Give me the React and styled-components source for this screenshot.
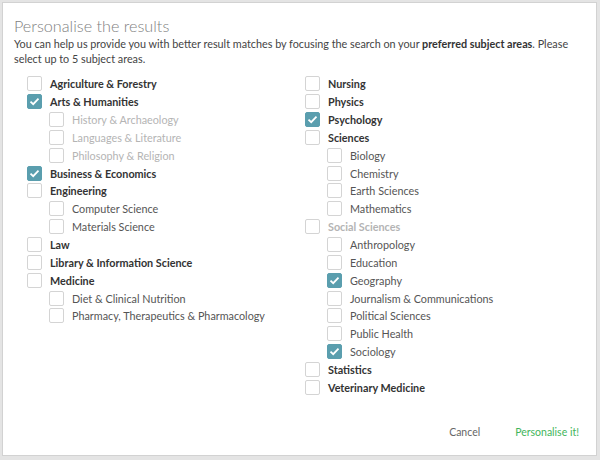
import React from "react";
import styled, { createGlobalStyle } from "styled-components";

const Global = createGlobalStyle`
  html, body {
    margin: 0;
    background: #e4e4e4;
  }
  body {
    font-family: Lato, "Open Sans", sans-serif;
  }
`;

const Frame = styled.div`
  width: 600px;
  height: 460px;
  box-sizing: border-box;
  padding: 2px 3px 4px 2px;
`;

const Modal = styled.div`
  height: 100%;
  box-sizing: border-box;
  background: #fff;
  border: 1px solid #d2d2d2;
  padding: 12px 12px 0 11px;
  display: flex;
  flex-direction: column;
`;

const Title = styled.h1`
  margin: 0;
  font-size: 16.2px;
  font-weight: 300;
  color: #7f7f7f;
  line-height: 22px;
`;

const Intro = styled.p`
  margin: 0;
  font-size: 10.8px;
  line-height: 14.5px;
  color: #444;
  strong {
    font-weight: 700;
    color: #333;
  }
`;

const Columns = styled.div`
  display: grid;
  grid-template-columns: 278px 1fr;
  margin-top: 9px;
  padding-left: 13px;
`;

const Column = styled.div`
  display: flex;
  flex-direction: column;
`;

const Row = styled.label`
  display: flex;
  align-items: center;
  height: 17.85px;
  padding-left: ${(p) => (p.$sub ? "22px" : "0")};
  font-size: 10.8px;
  font-weight: ${(p) => (p.$sub ? 400 : 700)};
  color: ${(p) => (p.$muted ? "#b4b4b4" : p.$sub ? "#555" : "#333")};
`;

const Box = styled.span`
  width: 15px;
  height: 15px;
  box-sizing: border-box;
  border-radius: 2px;
  border: 1px solid ${(p) => (p.$on ? "#5a9eae" : "#d4d4d4")};
  background: ${(p) => (p.$on ? "#5a9eae" : "#fff")};
  margin-right: 8px;
  display: flex;
  align-items: center;
  justify-content: center;
  flex-shrink: 0;
`;

const Footer = styled.div`
  margin-top: auto;
  display: flex;
  justify-content: flex-end;
  gap: 35px;
  padding: 0 5px 17px 0;
`;

const Action = styled.button`
  border: none;
  background: none;
  padding: 0;
  font-family: inherit;
  font-size: 10.5px;
  color: ${(p) => (p.$primary ? "#3fb55b" : "#666")};
  cursor: pointer;
`;

const Check = () => (
  <svg width="11" height="9" viewBox="0 0 11 9">
    <path d="M1.5 4.6 L4.2 7.2 L9.5 1.6" fill="none" stroke="#fff" strokeWidth="1.8" />
  </svg>
);

const left = [
  ["Agriculture & Forestry"],
  ["Arts & Humanities", { on: true }],
  ["History & Archaeology", { sub: true, muted: true }],
  ["Languages & Literature", { sub: true, muted: true }],
  ["Philosophy & Religion", { sub: true, muted: true }],
  ["Business & Economics", { on: true }],
  ["Engineering"],
  ["Computer Science", { sub: true }],
  ["Materials Science", { sub: true }],
  ["Law"],
  ["Library & Information Science"],
  ["Medicine"],
  ["Diet & Clinical Nutrition", { sub: true }],
  ["Pharmacy, Therapeutics & Pharmacology", { sub: true }],
];

const right = [
  ["Nursing"],
  ["Physics"],
  ["Psychology", { on: true }],
  ["Sciences"],
  ["Biology", { sub: true }],
  ["Chemistry", { sub: true }],
  ["Earth Sciences", { sub: true }],
  ["Mathematics", { sub: true }],
  ["Social Sciences", { muted: true }],
  ["Anthropology", { sub: true }],
  ["Education", { sub: true }],
  ["Geography", { sub: true, on: true }],
  ["Journalism & Communications", { sub: true }],
  ["Political Sciences", { sub: true }],
  ["Public Health", { sub: true }],
  ["Sociology", { sub: true, on: true }],
  ["Statistics"],
  ["Veterinary Medicine"],
];

const Subjects = ({ items }) => (
  <Column>
    {items.map(([name, o = {}]) => (
      <Row key={name} $sub={o.sub} $muted={o.muted}>
        <Box $on={o.on}>{o.on && <Check />}</Box>
        {name}
      </Row>
    ))}
  </Column>
);

export default function App() {
  return (
    <Frame>
      <Global />
      <Modal>
        <Title>Personalise the results</Title>
        <Intro>
          You can help us provide you with better result matches by focusing the search on your{" "}
          <strong>preferred subject areas</strong>. Please select up to 5 subject areas.
        </Intro>
        <Columns>
          <Subjects items={left} />
          <Subjects items={right} />
        </Columns>
        <Footer>
          <Action>Cancel</Action>
          <Action $primary>Personalise it!</Action>
        </Footer>
      </Modal>
    </Frame>
  );
}
